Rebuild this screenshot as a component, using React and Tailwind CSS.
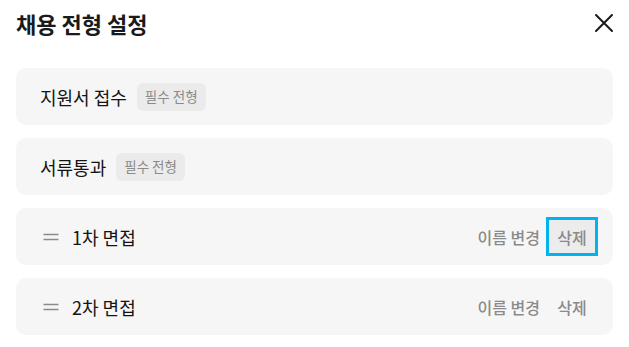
import React from 'react';

const FONT = { fontFamily: '"Noto Sans CJK KR", "Noto Sans", sans-serif' };

const steps = [
  { name: '지원서 접수', fixed: true },
  { name: '서류통과', fixed: true },
  { name: '1차 면접', focused: true },
  { name: '2차 면접' },
];

function CloseIcon() {
  return (
    <svg width="20" height="20" viewBox="0 0 20 20" fill="none">
      <path d="M2 2L18 18M18 2L2 18" stroke="#1a1a1a" strokeWidth="2" strokeLinecap="round" />
    </svg>
  );
}

function DragHandle() {
  return (
    <svg width="16" height="10" viewBox="0 0 16 10" fill="none">
      <path d="M0.5 2.5H15.5M0.5 7.5H15.5" stroke="#8c8c8c" strokeWidth="1.6" />
    </svg>
  );
}

function StepRow({ step }) {
  return (
    <div className="flex h-[57px] items-center rounded-[10px] bg-[#f6f6f6] pl-6 pr-[15px]">
      {!step.fixed && (
        <span className="mr-[13px] ml-[3px] flex items-center">
          <DragHandle />
        </span>
      )}
      <span className="text-[18px] leading-none text-[#141414]">{step.name}</span>
      {step.fixed && (
        <span className="ml-[10px] flex h-[28px] items-center rounded-[6px] bg-[#ebebeb] px-[8px] text-[13.5px] text-[#8a8a8a]">
          필수 전형
        </span>
      )}
      {!step.fixed && (
        <div className="ml-auto flex items-center">
          <button className="text-[16px] font-medium text-[#8a8a8a]">이름 변경</button>
          <button
            className={
              step.focused
                ? 'ml-[6px] flex h-[39px] w-[52px] items-center justify-center border-[3px] border-[#00b3ef] bg-[#ececec] text-[16px] font-medium text-[#8a8a8a]'
                : 'ml-[6px] flex h-[39px] w-[52px] items-center justify-center text-[16px] font-medium text-[#8a8a8a]'
            }
          >
            삭제
          </button>
        </div>
      )}
    </div>
  );
}

export default function App() {
  return (
    <div className="min-h-screen bg-white px-4" style={FONT}>
      <div className="flex h-[46px] items-center justify-between">
        <h1 className="text-[22px] font-bold text-[#1a1a1a]">채용 전형 설정</h1>
        <button className="mr-[-1px] flex items-center">
          <CloseIcon />
        </button>
      </div>
      <div className="mt-[22px] flex flex-col gap-[13px]">
        {steps.map((s) => (
          <StepRow key={s.name} step={s} />
        ))}
        <div className="h-[57px] rounded-[10px] bg-[#f6f6f6]" />
      </div>
    </div>
  );
}
